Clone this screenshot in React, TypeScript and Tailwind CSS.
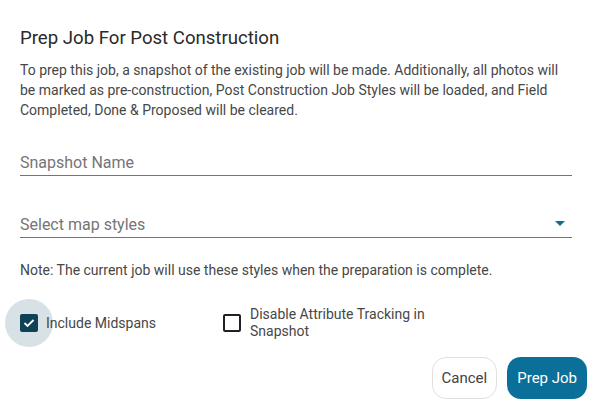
import React from "react";

export default function App() {
  return (
    <div className="w-[591px] h-[402px] bg-white overflow-hidden relative" style={{ fontFamily: "Roboto, 'Liberation Sans', sans-serif" }}>
      <div className="pl-[20px] pr-[19px] pt-[26px]">
        <h2 className="text-[18.6px] leading-[24px] text-[#2a2a2a]">Prep Job For Post Construction</h2>
        <p className="mt-[10px] text-[14px] leading-[20px] text-[#474747]">
          To prep this job, a snapshot of the existing job will be made. Additionally, all photos will be marked as pre-construction, Post Construction Job Styles will be loaded, and Field Completed, Done &amp; Proposed will be cleared.
        </p>
        <div className="mt-[31px] pt-[2px] border-b border-[#757575] h-[25px] flex items-start">
          <span className="text-[16px] leading-[20px] text-[#757575]">Snapshot Name</span>
        </div>
        <div className="mt-[37px] pt-[2px] border-b border-[#757575] h-[25px] flex items-start justify-between">
          <span className="text-[16px] leading-[20px] text-[#757575]">Select map styles</span>
          <svg width="10" height="5" viewBox="0 0 10 5" className="mt-[6px] mr-[7px]">
            <path d="M0 0 L10 0 L5 5 Z" fill="#0e6f93" />
          </svg>
        </div>
        <p className="mt-[22px] text-[14px] leading-[20px] text-[#474747]">
          Note: The current job will use these styles when the preparation is complete.
        </p>
        <div className="mt-[26px] flex items-center">
          <div className="flex items-center w-[203px]">
            <div className="relative w-[18px] h-[18px] shrink-0">
              <div className="absolute left-[-15px] top-[-15px] w-[48px] h-[48px] rounded-full bg-[#d8e2e6]" />
              <div className="relative w-[18px] h-[18px] rounded-[2px] bg-[#0f4256] flex items-center justify-center">
                <svg width="12" height="10" viewBox="0 0 12 10">
                  <path d="M1.5 5 L4.5 8 L10.5 2" fill="none" stroke="white" strokeWidth="1.8" />
                </svg>
              </div>
            </div>
            <span className="relative ml-[8px] text-[14px] leading-[18px] text-[#474747]">Include Midspans</span>
          </div>
          <div className="flex items-center">
            <div className="w-[18px] h-[18px] rounded-[2px] border-2 border-[#212121] shrink-0" />
            <span className="ml-[9px] text-[14px] leading-[17px] text-[#474747] w-[190px]">Disable Attribute Tracking in Snapshot</span>
          </div>
        </div>
      </div>
      <div className="absolute right-[4px] bottom-[3px] flex gap-[10px]">
        <button className="h-[42px] px-[9px] rounded-[14px] border border-[#e0e0e0] bg-white text-[15px] text-[#424242]">Cancel</button>
        <button className="h-[42px] px-[10px] rounded-[14px] bg-[#0b7099] text-[15px] text-white">Prep Job</button>
      </div>
    </div>
  );
}
